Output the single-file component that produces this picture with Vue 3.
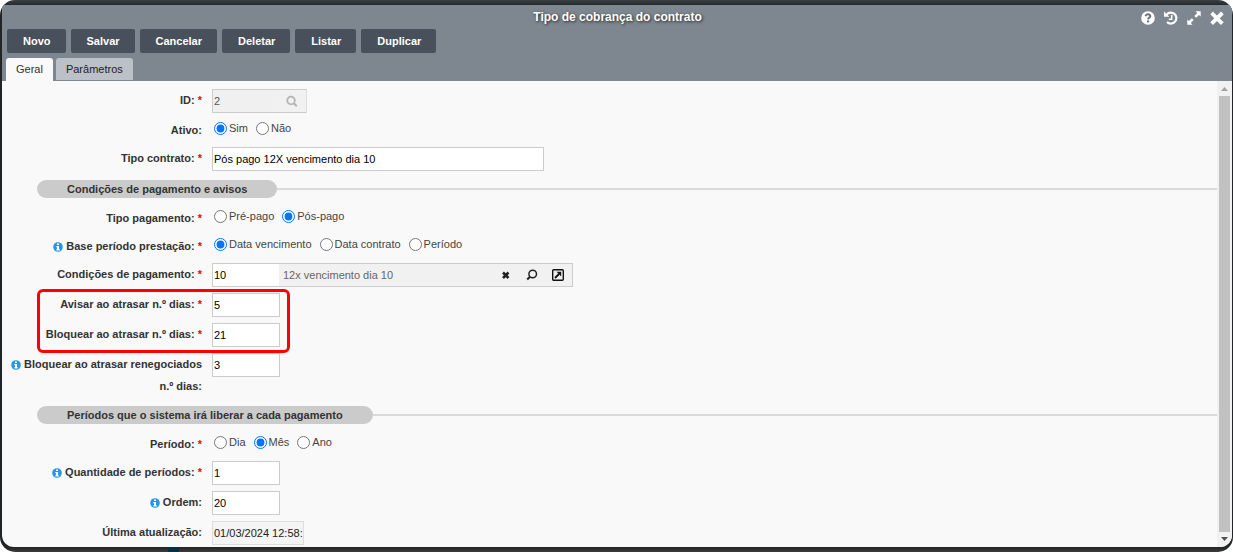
<script setup>
import { ref, reactive } from 'vue'

const actions = ['Novo', 'Salvar', 'Cancelar', 'Deletar', 'Listar', 'Duplicar']
const tabs = ['Geral', 'Parâmetros']
const activeTab = ref('Geral')

const groups = [
  {
    rows: [
      { id: 'id', label: 'ID:', required: true, type: 'key' },
      { id: 'ativo', label: 'Ativo:', type: 'radio', options: ['Sim', 'Não'] },
      { id: 'tipo', label: 'Tipo contrato:', required: true, type: 'text', size: 'wide' },
    ],
  },
  {
    title: 'Condições de pagamento e avisos',
    rows: [
      { id: 'pagamento', label: 'Tipo pagamento:', required: true, type: 'radio', options: ['Pré-pago', 'Pós-pago'] },
      { id: 'base', label: 'Base período prestação:', required: true, info: true, type: 'radio', options: ['Data vencimento', 'Data contrato', 'Período'] },
      { id: 'condicao', label: 'Condições de pagamento:', required: true, type: 'lookup' },
    ],
  },
  {
    marked: true,
    rows: [
      { id: 'avisar', label: 'Avisar ao atrasar n.º dias:', required: true, type: 'text', size: 'short' },
      { id: 'bloquear', label: 'Bloquear ao atrasar n.º dias:', required: true, type: 'text', size: 'short' },
    ],
  },
  {
    rows: [
      { id: 'renegociados', label: 'Bloquear ao atrasar renegociados n.º dias:', info: true, type: 'text', size: 'short' },
    ],
  },
  {
    title: 'Períodos que o sistema irá liberar a cada pagamento',
    rows: [
      { id: 'periodo', label: 'Período:', required: true, type: 'radio', options: ['Dia', 'Mês', 'Ano'] },
      { id: 'quantidade', label: 'Quantidade de períodos:', required: true, info: true, type: 'text', size: 'short' },
      { id: 'ordem', label: 'Ordem:', info: true, type: 'text', size: 'short' },
      { id: 'atualizacao', label: 'Última atualização:', type: 'text', size: 'date', readonly: true },
    ],
  },
]

const values = reactive({
  id: '2',
  ativo: 'Sim',
  tipo: 'Pós pago 12X vencimento dia 10',
  pagamento: 'Pós-pago',
  base: 'Data vencimento',
  condicao: '10',
  avisar: '5',
  bloquear: '21',
  renegociados: '3',
  periodo: 'Mês',
  quantidade: '1',
  ordem: '20',
  atualizacao: '01/03/2024 12:58:',
})
</script>

<template>
  <div class="window">
    <header class="header">
      <div class="titlebar">
        <h1>Tipo de cobrança do contrato</h1>
        <div class="tools">
          <button type="button" aria-label="Ajuda">
            <svg width="14" height="14" viewBox="0 0 14 14"><circle cx="7" cy="7" r="6.8" fill="#fff" /><path d="M4.500 5.200C4.800 3.800 5.900 3.200 7.100 3.300c1.400.1 2.300.9 2.200 2C9.200 6.700 7.200 6.700 7.100 8.400" fill="none" stroke="#6b747d" stroke-width="2" /><rect x="6" y="9.400" width="2.200" height="2" fill="#6b747d" /></svg>
          </button>
          <button type="button" aria-label="Histórico">
            <svg width="14" height="14" viewBox="0 0 14 14" fill="none" stroke="#fff"><path d="M2.500 3.800A5.500 5.500 0 1 1 3 11" stroke-width="2.200" /><path d="M0 .5v5.300h5.300z" fill="#fff" stroke="none" /><path d="M7.700 4v4.200H4.800" stroke-width="1.500" /></svg>
          </button>
          <button type="button" aria-label="Expandir">
            <svg width="14" height="14" viewBox="0 0 14 14"><path d="M8.500.300h5.200v5.200L12 3.900 9.200 6.700 7.400 4.900 10.200 2.100zM.300 8.500 2 10.100 4.800 7.300 6.600 9.100 3.800 11.900 5.500 13.700H.300z" fill="#fff" /></svg>
          </button>
          <button type="button" aria-label="Fechar">
            <svg width="14" height="14" viewBox="0 0 14 14"><path d="M3 3.300l8 8M11 3.300l-8 8" stroke="#fff" stroke-width="3.800" stroke-linecap="square" /></svg>
          </button>
        </div>
      </div>
      <div class="actions">
        <button v-for="a in actions" :key="a" type="button">{{ a }}</button>
      </div>
      <nav class="tabs" role="tablist">
        <button v-for="t in tabs" :key="t" type="button" role="tab" :aria-selected="activeTab === t" :class="{ active: activeTab === t }" @click="activeTab = t">{{ t }}</button>
      </nav>
    </header>

    <div class="body">
      <form class="form" @submit.prevent>
        <section v-for="(g, i) in groups" :key="i" :class="{ marked: g.marked }">
          <h2 v-if="g.title"><span>{{ g.title }}</span></h2>
          <div v-for="r in g.rows" :key="r.id" class="row">
            <component :is="r.type === 'radio' ? 'div' : 'label'" :id="r.id + '-label'" class="label" :for="r.type === 'radio' ? null : r.id">
              <svg v-if="r.info" class="info" width="10" height="10" viewBox="0 0 10 10"><circle cx="5" cy="5" r="4.800" fill="#2196f3" /><path d="M4 1.500h2v1.500H4zM3.300 4H6v3.200h.800v1.200H3.300V7.200H4V5.200h-.700z" fill="#fff" /></svg>
              {{ r.label }}<b v-if="r.required" class="required"> *</b>
            </component>

            <div v-if="r.type === 'radio'" class="radios" role="radiogroup" :aria-labelledby="r.id + '-label'">
              <label v-for="o in r.options" :key="o"><input v-model="values[r.id]" type="radio" :name="r.id" :value="o" />{{ o }}</label>
            </div>

            <div v-else-if="r.type === 'key'" class="combo key">
              <input :id="r.id" v-model="values[r.id]" type="text" disabled />
              <button type="button" disabled aria-label="Pesquisar">
                <svg width="12" height="12" viewBox="0 0 12 12" fill="none" stroke="#b5b5b5" stroke-width="1.800"><circle cx="5" cy="5.500" r="3.800" /><path d="M7.800 8.300l3 3" stroke-width="2" /></svg>
              </button>
            </div>

            <div v-else-if="r.type === 'lookup'" class="combo lookup">
              <input :id="r.id" v-model="values[r.id]" type="text" />
              <output :for="r.id">12x vencimento dia 10</output>
              <button type="button" aria-label="Limpar">
                <svg width="10" height="10" viewBox="0 0 10 10"><path d="M2 2.500l5.500 5.500M7.500 2.500l-5.500 5.500" stroke="#222" stroke-width="2.600" /></svg>
              </button>
              <button type="button" aria-label="Pesquisar">
                <svg width="12" height="12" viewBox="0 0 12 12" fill="none" stroke="#222"><circle cx="6.700" cy="5" r="3.800" stroke-width="1.500" /><path d="M4 7.700L1.200 10.500" stroke-width="2" /></svg>
              </button>
              <button type="button" aria-label="Abrir">
                <svg width="12" height="12" viewBox="0 0 12 12" fill="none" stroke="#111"><rect x=".700" y=".700" width="10.600" height="10.600" rx="1" stroke-width="1.400" /><path d="M3 9l4-4" stroke-width="1.800" /><path d="M4.500 2.800h4.700v4.700z" fill="#111" stroke="none" /></svg>
              </button>
            </div>

            <input v-else :id="r.id" v-model="values[r.id]" type="text" class="field" :class="r.size" :readonly="r.readonly" />
          </div>
        </section>
      </form>
      <div class="scrollbar" aria-hidden="true">
        <svg width="15" height="15" viewBox="0 0 15 15"><path d="M4 10h7L7.500 6z" fill="#a3a3a3" /></svg>
        <div class="thumb"></div>
        <svg width="15" height="15" viewBox="0 0 15 15"><path d="M4 5h7L7.500 9z" fill="#505050" /></svg>
      </div>
    </div>
  </div>
</template>

<style>
body {
  background: #fff;
}
</style>

<style scoped>
.window {
  box-sizing: border-box;
  min-height: 100vh;
  display: flex;
  flex-direction: column;
  padding: 5px 1px 5px 2px;
  border-radius: 15px;
  overflow: hidden;
  background:
    linear-gradient(#063044, #063044) 168px 100% / 11px 5px no-repeat,
    linear-gradient(#3b4043, #25292c) 0 0 / 100% 5px no-repeat,
    linear-gradient(#222, #3c3c3c) 0 100% / 100% 5px no-repeat,
    #222527;
  font: 11px "Liberation Sans", Arial, sans-serif;
  color: #444;
}
button,
input {
  font: inherit;
  margin: 0;
}
button {
  border: 0;
  padding: 0;
  background: none;
}
svg {
  display: block;
}
.header {
  background: #7e8790;
}
.titlebar {
  display: grid;
  grid-template-columns: 1fr auto 1fr;
  align-items: center;
  height: 24px;
  padding: 0 8px 0 9px;
}
h1 {
  grid-column: 2;
  margin: 0;
  font-size: 12px;
  line-height: 24px;
  color: #fff;
  text-shadow: 1px 1px 3px #222;
}
.tools {
  display: flex;
  justify-content: flex-end;
  gap: 9px;
  padding-top: 2px;
}
.actions {
  display: flex;
  gap: 5px;
  padding: 0 5px;
}
.actions button {
  height: 24px;
  padding: 0 15px 0 16px;
  border-radius: 2px;
  background: #48515b;
  color: #fff;
  font-weight: bold;
}
.tabs {
  display: flex;
  gap: 3px;
  padding: 5px 4px 0;
}
.tabs button {
  height: 22px;
  padding: 0 10px;
  border-radius: 3px 3px 0 0;
  background: #bcc1c9;
  color: #222;
}
.tabs .active {
  height: 23px;
  padding-bottom: 1px;
  background: #f9f9f9;
  color: #333;
}
.body {
  flex: 1;
  display: flex;
  background: #f9f9f9;
  border-radius: 0 0 12px 12px;
  overflow: hidden;
}
.form {
  flex: 1;
  padding: 8px 0 0;
}
h2 {
  display: flex;
  align-items: center;
  margin: 9px 0 9px 35px;
  font-size: 11px;
  line-height: 18px;
  color: #333;
}
h2 span {
  padding: 0 30px;
  border-radius: 9px;
  background: #cbcbcb;
}
h2::after {
  content: "";
  flex: 1;
  height: 2px;
  background: #dadada;
}
.row {
  display: flex;
  align-items: flex-start;
  gap: 10px;
  margin-bottom: 6px;
  padding-left: 5px;
}
section:last-child .row:last-child {
  margin-bottom: 2px;
}
.label {
  width: 195px;
  line-height: 22px;
  text-align: right;
  font-weight: bold;
  color: #333;
}
.info {
  display: inline-block;
  vertical-align: -2px;
}
.required {
  color: #f00;
}
.marked {
  position: relative;
}
.marked::after {
  content: "";
  position: absolute;
  top: -4px;
  bottom: -6px;
  left: 35px;
  width: 247px;
  border: 3px solid #f00;
  border-radius: 6px;
  pointer-events: none;
}
.radios {
  display: flex;
  gap: 8px;
  padding-left: 2px;
  line-height: 18px;
}
.radios label {
  display: flex;
  align-items: center;
  gap: 2px;
}
.radios input {
  width: 13px;
  height: 13px;
}
.field,
.combo {
  box-sizing: border-box;
  height: 24px;
  border: 1px solid #ccc;
  background: #fff;
}
.field {
  padding: 0 0 0 1px;
  color: #000;
}
.wide {
  width: 332px;
}
.short {
  width: 68px;
}
.date {
  width: 92px;
  border-color: #ddd;
  background: #f4f4f4;
  color: #222;
}
.combo {
  display: flex;
  align-items: center;
  background: #f1f1f1;
}
.combo input {
  box-sizing: border-box;
  width: 66px;
  height: 22px;
  padding: 0 0 0 1px;
  border: 0;
  background: #fff;
  color: #000;
}
.combo button {
  display: flex;
  justify-content: center;
  width: 26px;
}
.key {
  width: 95px;
  border-color: #ccc #ddd #ccc #ccc;
}
.key input {
  background: #f0f0f0;
  color: #555;
}
.lookup {
  width: 361px;
}
.lookup output {
  flex: 1;
  padding-left: 4px;
  color: #666;
}
.lookup button:last-child {
  margin-right: 1px;
}
.scrollbar {
  display: flex;
  flex-direction: column;
  width: 15px;
  background: #f1f1f1;
}
.thumb {
  flex: 1;
  margin: 0 2px;
  background: #c1c1c1;
}
</style>
